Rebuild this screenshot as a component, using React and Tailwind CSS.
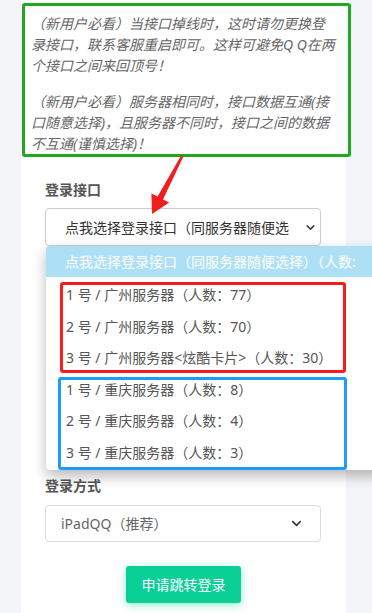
import React from 'react';
import { ChevronDown } from 'lucide-react';

const guangzhou = [
  '1 号 / 广州服务器（人数：77）',
  '2 号 / 广州服务器（人数：70）',
  '3 号 / 广州服务器<炫酷卡片>（人数：30）',
];

const chongqing = [
  '1 号 / 重庆服务器（人数：8）',
  '2 号 / 重庆服务器（人数：4）',
  '3 号 / 重庆服务器（人数：3）',
];

export default function App() {
  return (
    <div className="relative w-[372px] h-[613px] overflow-hidden bg-[#f4f5f8] font-['Noto_Sans','Noto_Sans_CJK_SC',sans-serif]">
      <div className="ml-[21px] w-[325px] h-full bg-white pt-[3px]">
        {/* notice box */}
        <div className="ml-[1px] w-[329px] h-[154px] border-[3px] border-[#1fa91f] rounded-[3px] pl-[6px] pt-[7px] italic text-[14px] leading-[21px] text-[#666] whitespace-nowrap">
          <p>（新用户必看）当接口掉线时，这时请勿更换登</p>
          <p>录接口，联系客服重启即可。这样可避免Q Q在两</p>
          <p>个接口之间来回顶号！</p>
          <p className="mt-[15px]">（新用户必看）服务器相同时，接口数据互通(接</p>
          <p>口随意选择)，且服务器不同时，接口之间的数据</p>
          <p>不互通(谨慎选择)！</p>
        </div>

        <div className="px-[24px]">
          <div className="mt-[23px] h-[20px] leading-[20px] text-[14px] font-semibold text-[#555]">登录接口</div>
          <div className="mt-[8px] w-[276px] h-[38px] border border-[#ccc] rounded-[4px] flex items-center pl-[19px] pr-[3px]">
            <span className="flex-1 whitespace-nowrap text-[14px] text-[#333]">点我选择登录接口（同服务器随便选</span>
            <ChevronDown className="w-[13px] h-[13px] text-[#444]" strokeWidth={3} />
          </div>

          <div className="mt-[230px] h-[20px] leading-[20px] text-[14px] font-semibold text-[#555]">登录方式</div>
          <div className="mt-[9px] w-[276px] h-[37px] border border-[#dcdcdc] rounded-[4px] flex items-center justify-between pl-[15px] pr-[16px]">
            <span className="text-[14px] text-[#666]">iPadQQ（推荐）</span>
            <ChevronDown className="w-[15px] h-[15px] text-[#333]" strokeWidth={2.5} />
          </div>

          <button className="mt-[24px] ml-[81px] w-[115px] h-[37px] bg-[#0acf97] rounded-[3px] text-white text-[14px] shadow-[0_2px_8px_rgba(10,207,151,0.45)]">
            申请跳转登录
          </button>
        </div>
      </div>

      {/* red arrow */}
      <svg className="absolute left-[140px] top-[150px]" width="50" height="70" viewBox="0 0 50 70">
        <polygon points="41.1,5.5 43.4,6.6 23,49.4 29.2,52.6 12,64 11.4,43.4 17.6,46.6" fill="#f21d1d" />
      </svg>

      {/* open dropdown */}
      <div className="absolute left-[46px] top-[246px] w-[340px] h-[224px] bg-white rounded-l-[4px] shadow-[0_6px_14px_rgba(0,0,0,0.28)]">
        <div className="h-[31px] leading-[31px] bg-[#ade0f5] rounded-tl-[4px] pl-[19px] text-white text-[14px] whitespace-nowrap overflow-hidden">
          点我选择登录接口（同服务器随便选择）（人数:
        </div>
        <div className="pt-[2px]">
          {[...guangzhou, ...chongqing].map((item) => (
            <div key={item} className="h-[31.5px] leading-[31.5px] pl-[20px] text-[14px] text-[#555] whitespace-nowrap">
              {item}
            </div>
          ))}
        </div>
        <div className="absolute left-[14px] top-[36px] w-[286px] h-[91px] border-[3px] border-[#ff1a1a] rounded-[3px]" />
        <div className="absolute left-[12px] top-[131px] w-[289px] h-[93px] border-[3px] border-[#1e9bff] rounded-[3px]" />
      </div>
    </div>
  );
}
